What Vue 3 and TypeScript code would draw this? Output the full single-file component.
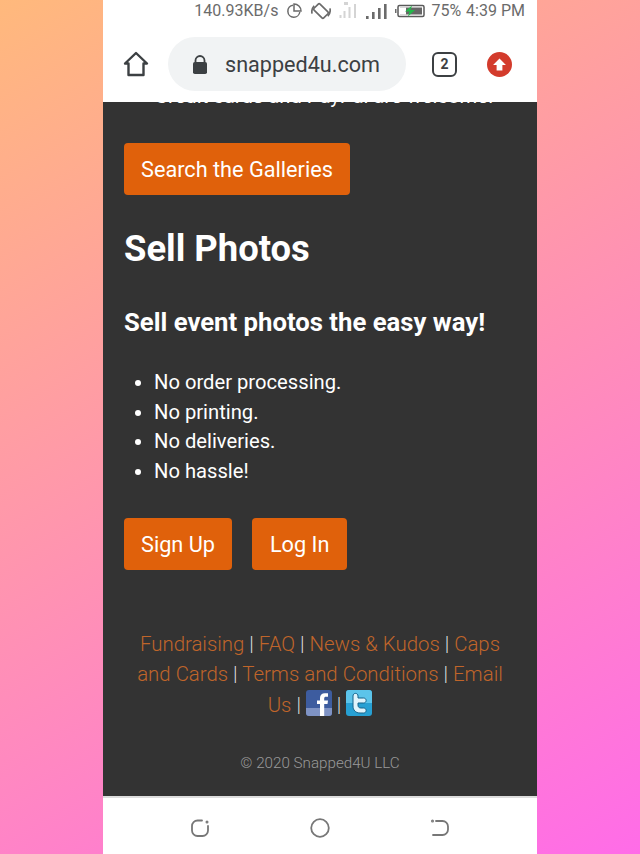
<template>
  <div class="page">
    <div class="phone">
      <div class="status-bar">
        <span>140.93KB/s</span>
        <svg class="data" width="16" height="16" viewBox="0 0 16 16" fill="none" stroke="#6b6b6b" stroke-width="1.500">
          <path d="M7 2.200a6 6 0 1 0 6.800 6.800" />
          <path d="M8 1v7h7a7 7 0 0 0-7-7z" />
        </svg>
        <svg width="20" height="20" viewBox="0 0 19 19" fill="none" stroke="#6b6b6b" stroke-width="1.600">
          <rect x="5.500" y="3" width="8" height="13" rx="1.200" transform="rotate(-45 9.500 9.500)" />
          <path d="M1 12A8.500 8.500 0 0 1 3 4.500M18 7A8.500 8.500 0 0 1 16 14.500" />
        </svg>
        <svg width="18" height="17" viewBox="0 0 18 17" fill="#d4d4d4">
          <rect x="0.500" y="13" width="2" height="3" />
          <rect x="4.500" y="9" width="2" height="7" />
          <rect x="9.500" y="5" width="2" height="11" />
          <rect x="15" y="2" width="2" height="14" />
          <rect x="5" y="0" width="4" height="3" />
        </svg>
        <svg width="22" height="16" viewBox="0 0 22 16" fill="#6b6b6b">
          <rect x="1" y="13" width="2.600" height="3" />
          <rect x="7" y="9" width="2.600" height="7" />
          <rect x="13" y="5" width="2.600" height="11" />
          <rect x="19" y="1" width="2.600" height="15" />
        </svg>
        <svg width="30" height="14" viewBox="0 0 30 14" fill="none">
          <rect x="0" y="5" width="1.500" height="4" fill="#6b6b6b" />
          <rect x="3" y="1.500" width="26" height="11" rx="1.500" stroke="#5a5a5a" stroke-width="1.500" />
          <rect x="5" y="3.500" width="22" height="7" fill="#666" />
          <rect x="5" y="3.500" width="6" height="7" fill="#fff" />
          <path d="M17 1.500 10 7.500h4.500l-1.500 5 7-6.500h-4.500z" fill="#22b84a" />
        </svg>
        <span class="battery-level">75%</span>
        <span class="clock">4:39 PM</span>
      </div>

      <div class="browser-bar">
        <svg class="home" width="26" height="26" viewBox="0 0 26 26" fill="none" stroke="#3c4043" stroke-width="2.400" stroke-linejoin="round">
          <path d="M2 12.500 13 2l11 10.500h-3.500V24H5.500V12.500z" />
        </svg>
        <div class="url-pill">
          <svg width="16" height="19" viewBox="0 0 16 19">
            <path d="M3.500 7.500V5.500a4.500 4.500 0 0 1 9 0v2" fill="none" stroke="#3c4043" stroke-width="1.800" />
            <rect x="1" y="7" width="14" height="12" rx="1.800" fill="#3c4043" />
          </svg>
          <span>snapped4u.com</span>
        </div>
        <div class="tabs">2</div>
        <div class="update">
          <svg width="15" height="15" viewBox="0 0 14 14" fill="#fff">
            <path d="M7 1.500 13 7.500H9.700V12.500H4.300V7.500H1z" />
          </svg>
        </div>
      </div>

      <main class="content">
        <p class="cut-line">Credit cards and PayPal are welcome!</p>
        <a class="btn search">Search the Galleries</a>
        <h1>Sell Photos</h1>
        <h2>Sell event photos the easy way!</h2>
        <ul>
          <li v-for="item in points" :key="item">{{ item }}</li>
        </ul>
        <div class="actions">
          <a class="btn">Sign Up</a>
          <a class="btn login">Log In</a>
        </div>
        <footer>
          <p class="links">
            <a>Fundraising</a> | <a>FAQ</a> | <a>News &amp; Kudos</a> | <a>Caps and Cards</a> | <a>Terms and Conditions</a> | <a>Email Us</a> |
            <svg class="social" width="26" height="26" viewBox="0 0 26 26">
              <rect width="26" height="26" rx="3" fill="#3d5c9f" />
              <path d="M0 18h26v5a3 3 0 0 1-3 3H3a3 3 0 0 1-3-3z" fill="#7f93c4" />
              <path d="M14 26V14h-3v-3.500h3V8c0-3.200 2-4.800 4.800-4.800H22v3.500h-2c-1.300 0-1.800.6-1.800 1.700v2.100H22l-.5 3.500h-3.300v12z" fill="#fff" />
            </svg>
            |
            <svg class="social" width="26" height="26" viewBox="0 0 26 26">
              <rect width="26" height="26" rx="3" fill="#27a0d3" />
              <path d="M0 3a3 3 0 0 1 3-3h20a3 3 0 0 1 3 3v10H0z" fill="#5cc4ea" />
              <path d="M7 6c0-3.500 5-3.500 5 0v2h5.500c3.500 0 3.500 5 0 5H12v2c0 2 1 3 3 3h2.500c3.500 0 3.500 5 0 5H14c-4.500 0-7-3-7-7z" fill="#dff4fc" stroke="#15628a" stroke-width="1" />
            </svg>
          </p>
          <p class="copyright">© 2020 Snapped4U LLC</p>
        </footer>
      </main>

      <div class="nav-bar">
        <svg width="20" height="20" viewBox="0 0 20 20" fill="none" stroke="#777" stroke-width="1.800" stroke-linecap="round">
          <path d="M12 2.500H7.500A5.500 5.500 0 0 0 2 8v4.500A5.500 5.500 0 0 0 7.500 18h5a5.500 5.500 0 0 0 5.500-5.500V8" />
          <circle cx="17" cy="4" r=".6" />
        </svg>
        <svg width="20" height="20" viewBox="0 0 20 20" fill="none" stroke="#777" stroke-width="1.800">
          <circle cx="10" cy="10" r="8.800" />
        </svg>
        <svg width="20" height="20" viewBox="0 0 20 20" fill="none" stroke="#777" stroke-width="1.800" stroke-linecap="round">
          <path d="M6 3h6.500a5.500 5.500 0 0 1 5.500 5.500v3a5.500 5.500 0 0 1-5.500 5.500H3" />
          <circle cx="2.500" cy="3" r=".6" />
        </svg>
      </div>
    </div>
  </div>
</template>

<script setup lang="ts">
const points: string[] = ["No order processing.", "No printing.", "No deliveries.", "No hassle!"];
</script>

<style>
html,
body {
  margin: 0;
  padding: 0;
}
</style>

<style scoped>
.page {
  height: 854px;
  overflow: hidden;
  display: flex;
  justify-content: center;
  background: linear-gradient(150deg, #ffb97c 0%, #ff6ce8 100%);
  font-family: Roboto, "Liberation Sans", sans-serif;
}

.phone {
  width: 434px;
  height: 854px;
  display: flex;
  flex-direction: column;
  background: #fff;
}

.status-bar {
  height: 21px;
  flex: none;
  display: flex;
  align-items: center;
  justify-content: flex-end;
  gap: 8px;
  padding-right: 12px;
  font-size: 16px;
  color: #6b6b6b;
}

.data {
  margin-right: 1px;
}

.battery-level {
  margin-left: -2px;
}

.clock {
  margin-left: -3px;
}

.browser-bar {
  height: 81px;
  flex: none;
  display: flex;
  align-items: center;
  padding-top: 5px;
  box-sizing: border-box;
}

.home {
  margin-left: 20px;
  flex: none;
}

.url-pill {
  margin-left: 19px;
  width: 238px;
  height: 54px;
  flex: none;
  box-sizing: border-box;
  padding-left: 24px;
  border-radius: 27px;
  background: #f1f3f4;
  display: flex;
  align-items: center;
  gap: 17px;
  font-size: 21.600px;
  color: #3c4043;
}

.tabs {
  margin-left: 26px;
  width: 25px;
  height: 25px;
  flex: none;
  box-sizing: border-box;
  border: 2.500px solid #3c4043;
  border-radius: 6px;
  display: flex;
  align-items: center;
  justify-content: center;
  font-size: 14px;
  font-weight: 700;
  color: #3c4043;
}

.update {
  margin-left: 30px;
  width: 25px;
  height: 25px;
  flex: none;
  border-radius: 50%;
  background: #d33b2c;
  display: flex;
  align-items: center;
  justify-content: center;
}

.content {
  flex: 1;
  min-height: 0;
  overflow: hidden;
  background: #333;
  color: #fff;
  padding: 0 21px;
}

.cut-line {
  margin: -18px 0 0;
  padding-left: 8px;
  height: 27px;
  line-height: 25px;
  white-space: nowrap;
  text-align: center;
  font-size: 20.200px;
}

.btn {
  display: inline-block;
  box-sizing: border-box;
  height: 52px;
  line-height: 53px;
  padding: 0 17px;
  border-radius: 4px;
  background: #e0610b;
  color: #fff;
  font-size: 21.700px;
}

.login {
  padding: 0 18px;
}

.search {
  margin-top: 32px;
}

h1 {
  margin: 28px 0 0;
  font-size: 36.400px;
  line-height: 52px;
  font-weight: 700;
}

h2 {
  margin: 27px 0 0;
  font-size: 25.700px;
  line-height: 40px;
  font-weight: 700;
}

ul {
  margin: 26px 0 0;
  padding-left: 30px;
  font-size: 20.200px;
  line-height: 29.700px;
}

.actions {
  margin-top: 31px;
  display: flex;
  gap: 20px;
}

footer {
  margin-top: 59px;
  padding: 0 11px;
  text-align: center;
}

.links {
  margin: 0;
  font-size: 20.400px;
  line-height: 30px;
  font-weight: 300;
  color: #ddd;
}

.links a {
  color: #c0652a;
}

.social {
  vertical-align: -4px;
  margin-top: 1px;
}

.copyright {
  margin: 33px 0 0;
  font-size: 15.200px;
  line-height: 20px;
  font-weight: 300;
  color: #999;
}

.nav-bar {
  height: 58px;
  flex: none;
  border-top: 2px solid #ddd;
  box-sizing: border-box;
  padding-top: 3px;
  display: flex;
  align-items: center;
  justify-content: center;
  gap: 100px;
}
</style>
